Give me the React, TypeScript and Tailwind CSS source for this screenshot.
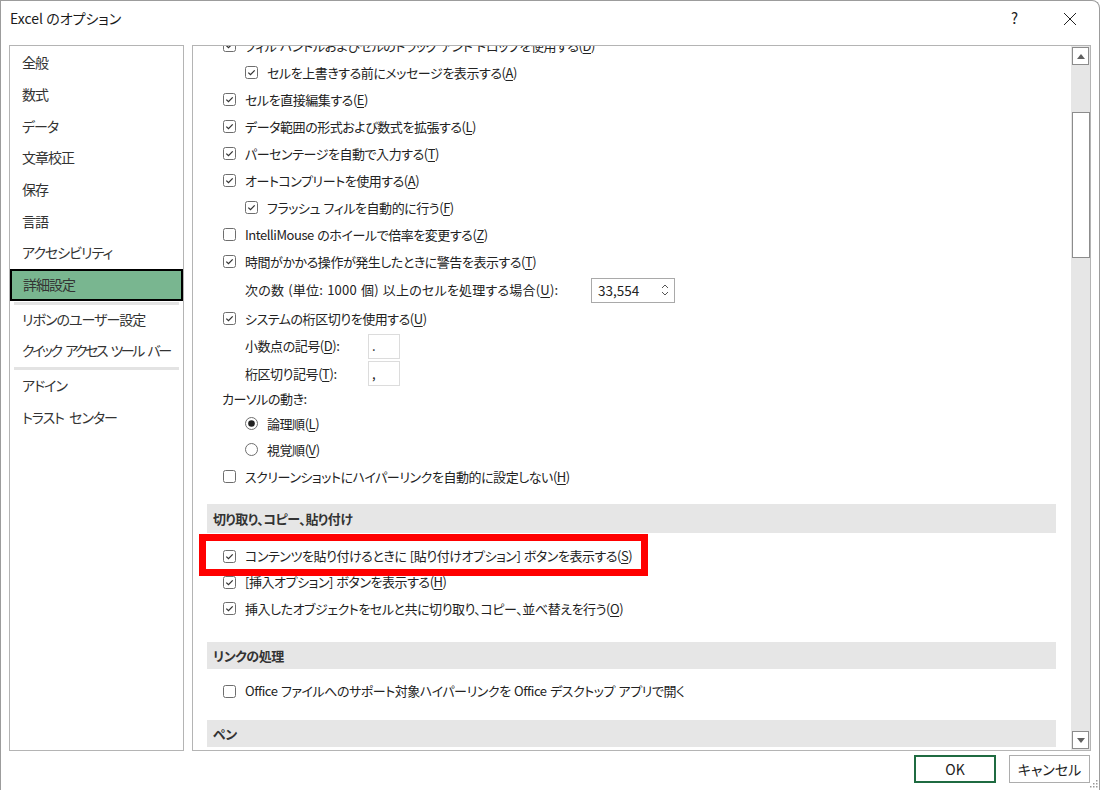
import React from "react";

const FONT = "font-['Noto_Sans_CJK_JP','Noto_Sans',sans-serif] [font-feature-settings:'palt']";

function Box({ checked = true }: { checked?: boolean }) {
  return (
    <svg width="13" height="13" viewBox="0 0 13 13" className="shrink-0">
      <rect x="0.5" y="0.5" width="12" height="12" rx="2" fill="white" stroke="#6e6e6e" />
      {checked && (
        <path d="M3.3 6.6 L5.5 8.7 L9.7 4.4" fill="none" stroke="#333" strokeWidth="1.3" />
      )}
    </svg>
  );
}

function Radio({ checked }: { checked: boolean }) {
  return (
    <svg width="13" height="13" viewBox="0 0 13 13" className="shrink-0">
      <circle cx="6.5" cy="6.5" r="6" fill="white" stroke="#6e6e6e" />
      {checked && <circle cx="6.5" cy="6.5" r="3.3" fill="#222" />}
    </svg>
  );
}

function Label({ text, accel, suffix }: { text: string; accel?: string; suffix?: string }) {
  return (
    <span className="whitespace-nowrap">
      {text}
      {accel && (
        <>
          (<span className="underline underline-offset-2">{accel}</span>)
        </>
      )}
      {suffix}
    </span>
  );
}

function CheckRow({
  text,
  accel,
  checked = true,
  indent = false,
  h = "h-[27px]",
}: {
  text: string;
  accel?: string;
  checked?: boolean;
  indent?: boolean;
  h?: string;
}) {
  return (
    <div className={`flex items-center gap-[9px] ${h} ${indent ? "pl-[52px]" : "pl-[30px]"}`}>
      <Box checked={checked} />
      <Label text={text} accel={accel} />
    </div>
  );
}

function Header({ text, h = "h-[28px]", mt }: { text: string; h?: string; mt: string }) {
  return (
    <div className={`${mt} ${h} ml-[14px] mr-[15px] bg-[#e6e6e6] flex items-center pl-[6px] font-bold text-[#333]`}>
      {text}
    </div>
  );
}

const navItems1 = ["全般", "数式", "データ", "文章校正", "保存", "言語", "アクセシビリティ"];

export default function App() {
  return (
    <div className={`w-[1100px] h-[790px] bg-white text-[#222] flex flex-col relative overflow-hidden ${FONT}`}>
      {/* window outline */}
      <div className="absolute inset-0 border-t border-l border-r border-[#9c9c9c] rounded-tr-[8px] pointer-events-none" />
      {/* Title bar */}
      <div className="h-[45px] flex items-start shrink-0">
        <div className="pl-[10px] pt-[8px] text-[14px] text-[#1a1a1a]">Excel のオプション</div>
        <div className="ml-auto flex items-start pt-[7px]">
          <span className="text-[15px] mr-[45px] text-[#222]">?</span>
          <svg width="14" height="14" viewBox="0 0 14 14" className="mr-[23px] mt-[5px]">
            <path d="M1 1 L13 13 M13 1 L1 13" stroke="#222" strokeWidth="1" />
          </svg>
        </div>
      </div>

      {/* Body */}
      <div className="flex h-[706px] shrink-0">
        {/* Left nav */}
        <div className="ml-[9px] w-[175px] border border-[#b4b4b4] pt-[1px] text-[14px] text-[#333] tracking-[-1px] [word-spacing:3px] whitespace-nowrap">
          {navItems1.map((t) => (
            <div key={t} className="h-[31.7px] flex items-center pl-[12px]">
              {t}
            </div>
          ))}
          <div className="h-[32px] flex items-center pl-[11px] bg-[#79b690] border-2 border-black">詳細設定</div>
          <div className="h-[3px] mx-[4px] mt-[1px] bg-[#e3e3e3]" />
          <div className="h-[30px] flex items-center pl-[12px]">リボンのユーザー設定</div>
          <div className="h-[32px] flex items-center pl-[12px] tracking-[-2.5px] [word-spacing:4px]">クイック アクセス ツール バー</div>
          <div className="h-[3px] mx-[4px] bg-[#e3e3e3]" />
          <div className="h-[32px] flex items-center pl-[12px]">アドイン</div>
          <div className="h-[32px] flex items-center pl-[12px]">トラスト センター</div>
        </div>

        {/* Right panel */}
        <div className="ml-[8px] w-[899px] border border-[#b4b4b4] flex">
          <div className="flex-1 overflow-hidden text-[13px] tracking-[-0.45px] [word-spacing:1px] relative">
            <div className="-mt-[14px]">
              <CheckRow text="フィル ハンドルおよびセルのドラッグ アンド ドロップを使用する" accel="D" />
              <CheckRow text="セルを上書きする前にメッセージを表示する" accel="A" indent />
              <CheckRow text="セルを直接編集する" accel="E" />
              <CheckRow text="データ範囲の形式および数式を拡張する" accel="L" />
              <CheckRow text="パーセンテージを自動で入力する" accel="T" />
              <CheckRow text="オートコンプリートを使用する" accel="A" />
              <CheckRow text="フラッシュ フィルを自動的に行う" accel="F" indent />
              <CheckRow text="IntelliMouse のホイールで倍率を変更する" accel="Z" checked={false} />
              <CheckRow text="時間がかかる操作が発生したときに警告を表示する" accel="T" />
              <div className="h-[30px] flex items-center pl-[52px]">
                <span className="w-[346px] tracking-[0.2px]">
                  <Label text="次の数 (単位: 1000 個) 以上のセルを処理する場合" accel="U" suffix=":" />
                </span>
                <div className="w-[84px] h-[25px] border border-[#a9a9a9] flex items-center pl-[6px] pr-[4px] text-[13.5px] tracking-normal">
                  <span>33,554</span>
                  <svg width="10" height="16" viewBox="0 0 10 16" className="ml-auto">
                    <path d="M2 6 L5 3 L8 6 M2 10 L5 13 L8 10" fill="none" stroke="#555" strokeWidth="1" />
                  </svg>
                </div>
              </div>
              <CheckRow text="システムの桁区切りを使用する" accel="U" />
              <div className="h-[28px] flex items-center pl-[52px]">
                <span className="w-[123px]">
                  <Label text="小数点の記号" accel="D" suffix=":" />
                </span>
                <div className="w-[32px] h-[25px] border border-[#dcdcdc] flex items-center pl-[3px]">.</div>
              </div>
              <div className="h-[27px] flex items-center pl-[52px]">
                <span className="w-[123px]">
                  <Label text="桁区切り記号" accel="T" suffix=":" />
                </span>
                <div className="w-[32px] h-[25px] border border-[#dcdcdc] flex items-center pl-[3px]">,</div>
              </div>
              <div className="h-[24px] flex items-center pl-[29px]">カーソルの動き:</div>
              <div className="h-[25px] flex items-center gap-[9px] pl-[52px]">
                <Radio checked />
                <Label text="論理順" accel="L" />
              </div>
              <div className="h-[27px] flex items-center gap-[9px] pl-[52px]">
                <Radio checked={false} />
                <Label text="視覚順" accel="V" />
              </div>
              <CheckRow text="スクリーンショットにハイパーリンクを自動的に設定しない" accel="H" checked={false} />
              <Header text="切り取り、コピー、貼り付け" mt="mt-[14px]" h="h-[29px]" />
              <div className="relative mt-[10px]">
                <CheckRow text="コンテンツを貼り付けるときに [貼り付けオプション] ボタンを表示する" accel="S" h="h-[26px]" />
                <div className="absolute left-[6px] -top-[9px] w-[449px] h-[42px] border-[7px] border-[#ff0000] z-10" />
              </div>
              <CheckRow text="[挿入オプション] ボタンを表示する" accel="H" h="h-[26px]" />
              <CheckRow text="挿入したオブジェクトをセルと共に切り取り、コピー、並べ替えを行う" accel="O" />
              <Header text="リンクの処理" mt="mt-[20px]" h="h-[27px]" />
              <div className="mt-[9px]">
                <CheckRow text="Office ファイルへのサポート対象ハイパーリンクを Office デスクトップ アプリで開く" checked={false} h="h-[26px]" />
              </div>
              <Header text="ペン" mt="mt-[16px]" h="h-[27px]" />
            </div>
          </div>

          {/* Scrollbar */}
          <div className="w-[19px] bg-[#e6e6e6] flex flex-col items-center py-[1px]">
            <div className="w-[17px] h-[18px] bg-white border border-[#8c8c8c] flex items-center justify-center">
              <svg width="8" height="5" viewBox="0 0 8 5">
                <path d="M0 5 L4 0 L8 5 Z" fill="#606060" />
              </svg>
            </div>
            <div className="w-[18px] h-[146px] mt-[47px] bg-white border border-[#8c8c8c]" />
            <div className="mt-auto w-[17px] h-[18px] bg-white border border-[#8c8c8c] flex items-center justify-center">
              <svg width="8" height="5" viewBox="0 0 8 5">
                <path d="M0 0 L8 0 L4 5 Z" fill="#606060" />
              </svg>
            </div>
          </div>
        </div>
      </div>

      {/* Buttons */}
      <div className="flex justify-end items-start pt-[4px] pr-[10px] text-[14px] relative flex-1">
        <div className="w-[82px] h-[28px] border-2 border-[#1f6b41] flex items-center justify-center">OK</div>
        <div className="ml-[13px] w-[81px] h-[28px] border border-[#adadad] flex items-center justify-center">キャンセル</div>
        <svg width="8" height="8" viewBox="0 0 8 8" className="absolute right-[2px] bottom-[2px]">
          <rect x="6" y="0" width="1.5" height="1.5" fill="#999" />
          <rect x="3" y="3" width="1.5" height="1.5" fill="#999" />
          <rect x="6" y="3" width="1.5" height="1.5" fill="#999" />
          <rect x="0" y="6" width="1.5" height="1.5" fill="#999" />
          <rect x="3" y="6" width="1.5" height="1.5" fill="#999" />
          <rect x="6" y="6" width="1.5" height="1.5" fill="#999" />
        </svg>
      </div>
    </div>
  );
}
